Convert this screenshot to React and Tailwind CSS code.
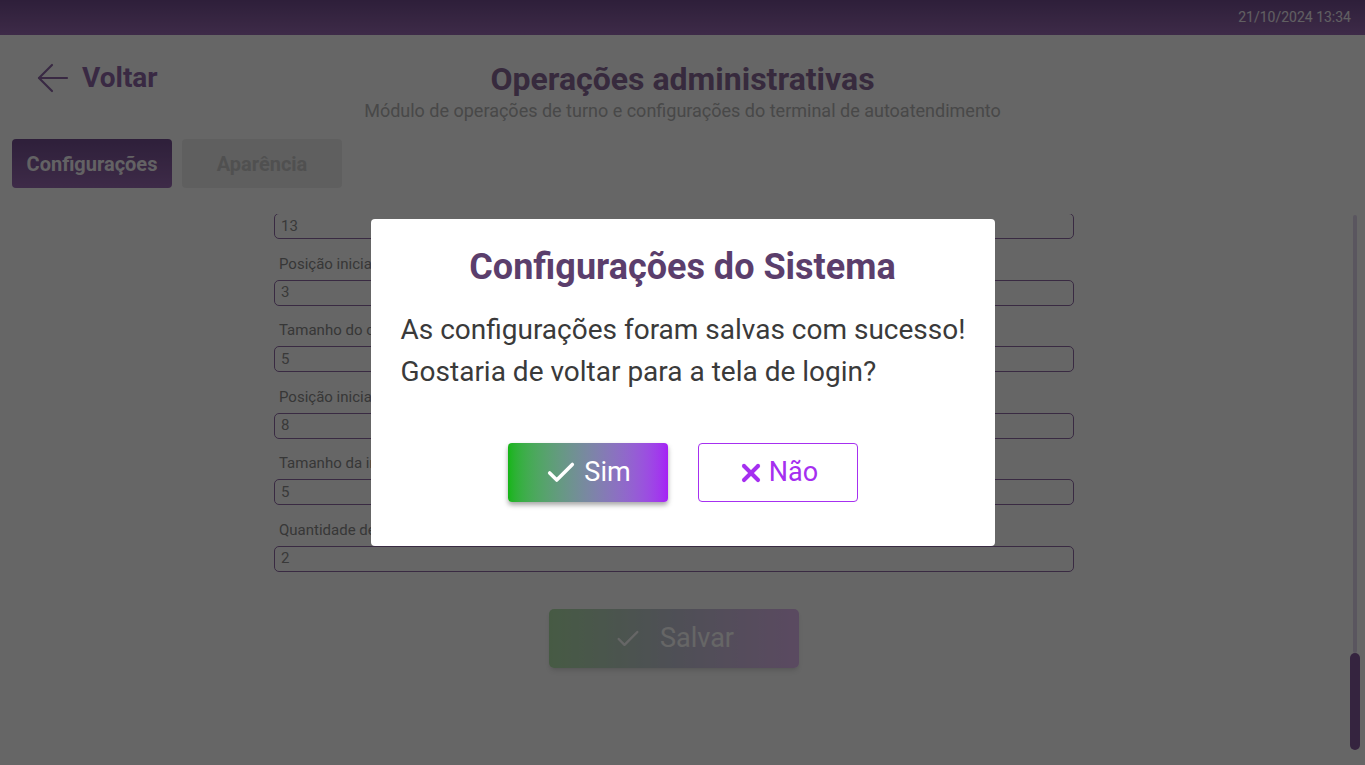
import { Check, X } from "lucide-react";

const fields = [
	{ label: "Tamanho do identificador", value: "13" },
	{ label: "Posição inicial do código do produto", value: "3" },
	{ label: "Tamanho do código do produto", value: "5" },
	{ label: "Posição inicial do peso", value: "8" },
	{ label: "Tamanho da informação de peso", value: "5" },
	{ label: "Quantidade de casas decimais", value: "2" },
];

const Field = ({ label, value, first }) => (
	<div className="flex flex-col">
		{!first && <span className="text-[15px] leading-[18px] text-[#8a8a8a] ml-[5px] mb-[7px]">{label}</span>}
		<div className="h-[26px] border border-[#8f6aa6] rounded-[5px] px-[6px] flex items-center text-[15px] text-[#8f8f8f]">
			{value}
		</div>
	</div>
);

const App = () => {
	return (
		<div
			className="relative h-[765px] w-full overflow-hidden bg-white flex flex-col"
			style={{ fontFamily: "Roboto, 'Noto Sans', sans-serif" }}
		>
			<div className="h-[35px] shrink-0 bg-gradient-to-b from-[#734e91] to-[#9b6bb4] flex items-center justify-end px-[14px]">
				<span className="text-[14px] text-white/90">21/10/2024 13:34</span>
			</div>

			<div className="grid grid-cols-[1fr_auto_1fr] items-start pt-[25px]">
				<div className="flex items-center gap-[13px] pl-[37px] pt-[3px]">
					<svg width="32" height="30" viewBox="0 0 32 30" fill="none" stroke="#8e68a8" strokeWidth="2.2" strokeLinecap="round" strokeLinejoin="round">
						<path d="M30 15H2" />
						<path d="M15 2 2 15l13 13" />
					</svg>
					<span className="text-[28px] font-bold text-[#8e68a8] leading-[30px]">Voltar</span>
				</div>
				<div className="flex flex-col items-center">
					<h1 className="text-[32px] font-bold leading-[38px] text-[#8a6a9a]">Operações administrativas</h1>
					<p className="mt-[2px] text-[18px] leading-[22px] text-[#b4b4b4]">
						Módulo de operações de turno e configurações do terminal de autoatendimento
					</p>
				</div>
				<div />
			</div>

			<div className="flex gap-[10px] px-[12px] mt-[17px]">
				<button className="w-[160px] h-[49px] rounded-[4px] bg-gradient-to-b from-[#744f92] to-[#9b6bb4] text-white/95 text-[20px] font-bold">
					Configurações
				</button>
				<button className="w-[160px] h-[49px] rounded-[4px] bg-[#eeeeee] text-[#c8c8c8] text-[20px] font-bold">
					Aparência
				</button>
			</div>

			<div className="flex flex-1 min-h-0 mt-[26px]">
				<div className="flex-1 overflow-hidden">
					<div className="w-[800px] -mt-[1px] ml-[274px] flex flex-col gap-[15.5px]">
						{fields.map((f, i) => (
							<Field key={f.label} label={f.label} value={f.value} first={i === 0} />
						))}
						<div className="flex justify-center mt-[22px]">
							<button className="w-[250px] h-[59px] rounded-[5px] bg-gradient-to-r from-[#b0e2aa] via-[#c4c6d6] to-[#e2b8f2] shadow-md flex items-center justify-center gap-[18px] text-white text-[27px]">
								<Check size={28} strokeWidth={2} />
								Salvar
							</button>
						</div>
					</div>
				</div>
				<div className="w-[20px] shrink-0 flex justify-center pb-[15px] pt-[1px] pr-[1px]">
					<div className="w-[10px] flex flex-col items-center">
						<div className="w-[4px] flex-1 rounded-full bg-[#e2d6ee]" />
						<div className="w-[10px] h-[97px] rounded-full bg-[#865a9e]" />
					</div>
				</div>
			</div>

			<div className="absolute inset-0 bg-black/60 flex items-center justify-center">
				<div className="w-[624px] h-[327px] bg-white rounded-[4px] flex flex-col px-[30px] pt-[27px]">
					<h2 className="text-center text-[36px] font-bold leading-[42px] text-[#5b3e6c] whitespace-nowrap">Configurações do Sistema</h2>
					<p className="mt-[21px] text-[28px] leading-[42px] text-[#3a3a3a] whitespace-nowrap">
						As configurações foram salvas com sucesso!
						<br />
						Gostaria de voltar para a tela de login?
					</p>
					<div className="flex justify-center gap-[30px] mt-[50px]">
						<button className="w-[160px] h-[59px] rounded-[4px] bg-gradient-to-r from-[#14b514] to-[#a51ff5] shadow-[0_3px_5px_rgba(0,0,0,0.35)] flex items-center justify-center gap-[6px] text-white text-[27px]">
							<Check size={34} strokeWidth={2.5} />
							Sim
						</button>
						<button className="w-[160px] h-[59px] rounded-[4px] border border-[#a630f0] bg-white flex items-center justify-center gap-[4px] text-[#a52ff0] text-[27px]">
							<X size={28} strokeWidth={3.5} />
							Não
						</button>
					</div>
				</div>
			</div>
		</div>
	);
};

export default App;
